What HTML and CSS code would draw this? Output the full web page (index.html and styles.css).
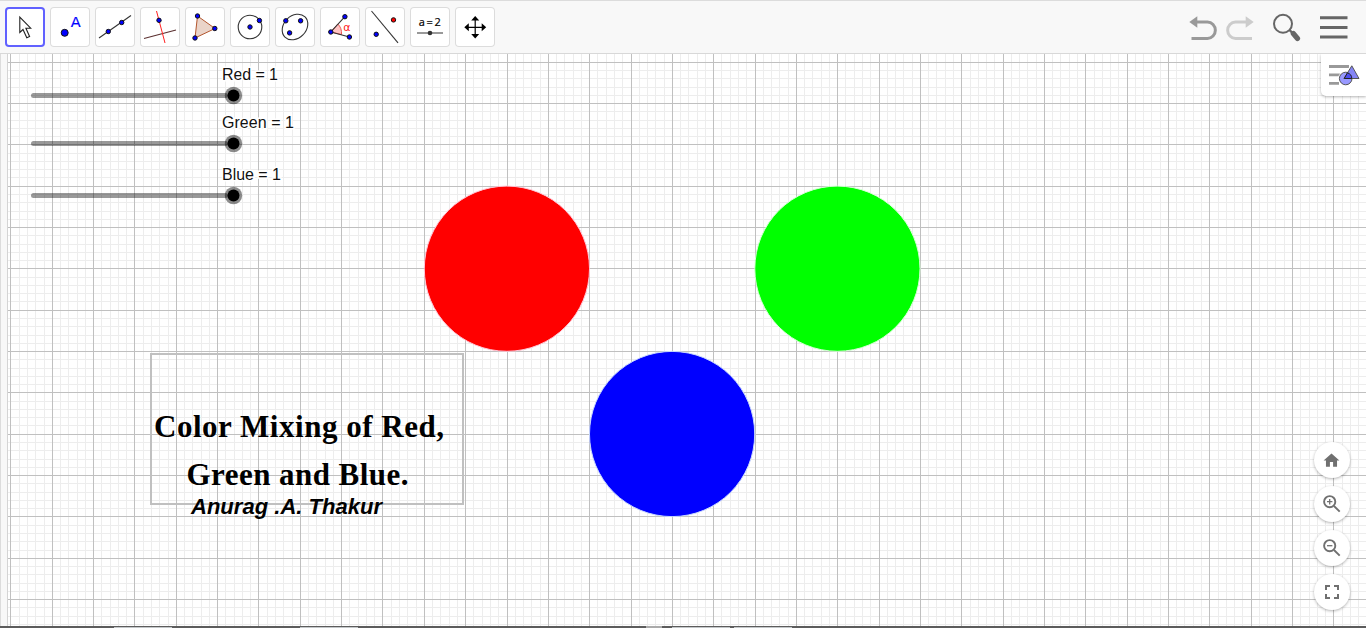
FILE: index.html
```html
<!DOCTYPE html>
<html lang="en">
<head>
<meta charset="utf-8">
<title>Color Mixing</title>
<link rel="stylesheet" href="styles.css">
</head>
<body>
<div class="app">
  <header class="toolbar">
    <div class="tools">
      <button class="tool selected" aria-label="Move"><svg viewBox="0 0 40 40"><path d="M14.800 10v15.500l3.200-3 3.800 8.200 2.800-1.200-3.700-8.300h4.800z" fill="#fff" stroke="#222" stroke-width="1.100"/></svg></button>
      <button class="tool" aria-label="Point"><svg viewBox="0 0 40 40"><circle class="pt" cx="14.700" cy="25.800" r="3.500"/><text x="20.700" y="19.500" class="letter">A</text></svg></button>
      <button class="tool" aria-label="Line"><svg viewBox="0 0 40 40"><path class="ln" d="M4 31 36 8.500"/><circle class="pt" cx="13.300" cy="24.500" r="2.200"/><circle class="pt" cx="26.700" cy="15.500" r="2.200"/></svg></button>
      <button class="tool" aria-label="Perpendicular"><svg viewBox="0 0 40 40"><path class="ln brown" d="M4 31.500 36 23"/><path d="M16.500 4 25 36" stroke="#ff2020"/><circle class="pt" cx="19" cy="13.300" r="2.200"/></svg></button>
      <button class="tool" aria-label="Polygon"><svg viewBox="0 0 40 40"><path d="M12.500 9 30 21.500 10 31z" fill="#ead4c9" stroke="#b3562e"/><circle class="pt" cx="12.500" cy="9" r="2.200"/><circle class="pt" cx="29.800" cy="21.500" r="2.200"/><circle class="pt" cx="10" cy="31" r="2.200"/></svg></button>
      <button class="tool" aria-label="Circle"><svg viewBox="0 0 40 40"><circle class="ln" cx="20" cy="20" r="11.800"/><circle class="pt" cx="20" cy="20" r="2.200"/><circle class="pt" cx="29.400" cy="13.500" r="2.200"/></svg></button>
      <button class="tool" aria-label="Conic"><svg viewBox="0 0 40 40"><ellipse class="ln" cx="20" cy="20" rx="14.200" ry="11.200" transform="rotate(-45 20 20)"/><circle class="pt" cx="10.800" cy="13.800" r="2.200"/><circle class="pt" cx="25.600" cy="13.800" r="2.200"/><circle class="pt" cx="14.600" cy="25.900" r="2.200"/></svg></button>
      <button class="tool" aria-label="Angle"><svg viewBox="0 0 40 40"><path d="M10.800 25 17.800 17Q22 21 21.500 27.500z" fill="#ffc4c4" stroke="#ee5555"/><path class="ln" d="M24.900 9.700 10.800 25 29.400 30"/><circle class="pt" cx="24.900" cy="9.700" r="2.200"/><circle class="pt" cx="10.800" cy="25" r="2.200"/><circle class="pt" cx="29.400" cy="30" r="2.200"/><text class="alpha" x="23.300" y="23.500">α</text></svg></button>
      <button class="tool" aria-label="Reflect"><svg viewBox="0 0 40 40"><path class="ln" d="M6.500 4 33 35.800"/><circle class="pt" cx="11.200" cy="27.300" r="2.200"/><circle class="pt red" cx="28.500" cy="12.900" r="2.200"/></svg></button>
      <button class="tool" aria-label="Slider"><svg viewBox="0 0 40 40"><text class="eq" x="8.800" y="18.800" textLength="22">a=2</text><path d="M7 26h26" stroke="#777" stroke-width="1.500"/><circle cx="20" cy="26" r="2.300" fill="#333"/></svg></button>
      <button class="tool" aria-label="Move view"><svg viewBox="0 0 40 40"><path d="M20.200 11v18M11 20.300h19" stroke="#000" stroke-width="1.200"/><path d="m20.200 9 4 4.500h-8zM20.200 31.600l-4-4.500h8zM9.300 20.300l4.500-4v8zM31.200 20.300l-4.500-4v8z"/></svg></button>
    </div>
    <div class="actions">
      <svg class="undo" viewBox="0 0 30 30"><path d="M8 8h10.500a7.800 8.200 0 0 1 0 16.500H2.500" fill="none" stroke="#999" stroke-width="3"/><path d="M.3 8l8-5.800v11.600z" fill="#999"/></svg>
      <svg class="redo" viewBox="0 0 30 30"><path d="M22 8H10.500a7.800 8.200 0 0 0 0 16.500H27" fill="none" stroke="#ccc" stroke-width="3"/><path d="M28.700 8l-8-5.800v11.600z" fill="#ccc"/></svg>
      <svg class="search" viewBox="0 0 30 30"><circle cx="10" cy="10.800" r="9" fill="none" stroke="#666" stroke-width="2"/><path d="m16.500 17 4 4" stroke="#666" stroke-width="2.400"/><path d="m20.300 20.500 4.200 5" stroke="#666" stroke-width="5.200" stroke-linecap="round"/></svg>
      <svg class="menu" viewBox="0 0 28 24"><path d="M0 1.700h27.500M0 11.500h27.500M0 21h27.500" stroke="#666" stroke-width="2.900"/></svg>
    </div>
  </header>
  <main class="workspace">
    <div class="divider"></div>
    <div class="view">
      <svg class="drawing" viewBox="8 54 1358 572">
        <path id="minor" class="minor"/>
        <path id="major" class="major"/>
        <g class="slider"><path d="M33.500 95.500h192"/><circle class="halo" cx="233.500" cy="95.500" r="8.700"/><circle cx="233.500" cy="95.500" r="6"/></g>
        <g class="slider"><path d="M33.500 143.500h192"/><circle class="halo" cx="233.500" cy="143.500" r="8.700"/><circle cx="233.500" cy="143.500" r="6"/></g>
        <g class="slider"><path d="M33.500 195.500h192"/><circle class="halo" cx="233.500" cy="195.500" r="8.700"/><circle cx="233.500" cy="195.500" r="6"/></g>
        <g class="label">
          <text x="222" y="80" textLength="56">Red = 1</text>
          <text x="222" y="128" textLength="72">Green = 1</text>
          <text x="222" y="180" textLength="59">Blue = 1</text>
        </g>
        <circle cx="506.900" cy="268.700" r="82.600" fill="#f00" stroke="#ffc8d8"/>
        <circle cx="837.400" cy="268.700" r="82.600" fill="#0f0" stroke="#d8ffd8"/>
        <circle cx="672.100" cy="434" r="82.600" fill="#00f" stroke="#c8d8ff"/>
        <rect class="frame" x="151" y="354" width="312" height="150"/>
        <g class="heading">
          <text x="154" y="437" textLength="290">Color Mixing of Red,</text>
          <text x="186.500" y="485" textLength="222">Green and Blue.</text>
        </g>
        <text class="author" x="191" y="514" textLength="191">Anurag .A. Thakur</text>
      </svg>
      <button class="stylebar" aria-label="Style bar"><svg viewBox="0 0 45 42"><path d="M8 12.500h20M8 20.800h12M8 29.300h10" stroke="#999" stroke-width="2.800"/><circle cx="24.700" cy="24.500" r="7.500" fill="#fff"/><path d="M30.800 9 40.500 25.500H20.500z" fill="#fff"/><circle cx="24.700" cy="24.500" r="6.300" fill="#9999ff" stroke="#555"/><path d="M30.800 11.800 38 24.500H23z" fill="#8585f5" stroke="#555"/><path d="M26.500 18.800Q31 20.500 30.700 24.500H23.200z" fill="#4d4df0" stroke="#222"/></svg></button>
      <div class="zoom-controls">
        <button class="round" aria-label="Home"><svg viewBox="0 0 24 24"><path d="M10 20v-6h4v6h5v-8h3L12 3 2 12h3v8z"/></svg></button>
        <button class="round" aria-label="Zoom in"><svg class="lens" viewBox="0 0 18 18"><circle cx="6.700" cy="6.700" r="5.600"/><path d="m11 11 5.700 5.700"/><path class="sign" d="M4 6.700h5.400M6.700 4v5.400"/></svg></button>
        <button class="round" aria-label="Zoom out"><svg class="lens" viewBox="0 0 18 18"><circle cx="6.700" cy="6.700" r="5.600"/><path d="m11 11 5.700 5.700"/><path class="sign" d="M4 6.700h5.400"/></svg></button>
        <button class="round" aria-label="Fullscreen"><svg class="full" viewBox="0 0 14 14"><path d="M0 5V0h5v2H2v3zM9 0h5v5h-2V2H9zM0 9h2v3h3v2H0zM12 9h2v5H9v-2h3z"/></svg></button>
      </div>
    </div>
  </main>
  <footer class="taskbar"><i class="seg s1"></i><i class="seg s2"></i><i class="glint"></i><i class="seg s3"></i><i class="seg s4"></i></footer>
</div>
<script src="grid.js"></script>
</body>
</html>
```
FILE: styles.css
```css
* { box-sizing: border-box; }
body { margin: 0; overflow: hidden; font-family: "Liberation Sans", sans-serif; }
button { padding: 0; border: 0; background: #fff; }
svg { display: block; }
.app { display: flex; flex-direction: column; width: 1366px; height: 628px; background: #fff; }
.toolbar { display: flex; justify-content: space-between; height: 54px; padding: 6px 18px 0 5px; background: #f8f8f8; border-top: 1px solid #dcdcdc; border-bottom: 1px solid #d8d8d8; }
.tools { display: flex; gap: 5px; }
.tool { width: 40px; height: 40px; border-radius: 4px; box-shadow: inset 0 0 0 1px #dcdcdc; }
.tool.selected { box-shadow: inset 0 0 0 2px #6161ff; }
.tool svg { width: 40px; height: 40px; }
.ln { fill: none; stroke: #333; stroke-width: 1.1; }
.brown { stroke: #5b3030; }
.pt { fill: #00f; stroke: #111; stroke-width: 1; }
.pt.red { fill: #f00; }
.letter { font: 14.5px "DejaVu Sans", sans-serif; fill: #00f; stroke: #00f; stroke-width: .2px; }
.alpha { font: 11px "DejaVu Sans", sans-serif; fill: #f22; }
.eq { font: 11px "Open Sans", sans-serif; fill: #000; stroke: #000; stroke-width: .2px; }
.actions { display: flex; }
.undo, .redo { width: 30px; height: 30px; margin-top: 7px; }
.undo { margin-right: 6px; }
.search { width: 30px; height: 30px; margin: 6px 17px 0 18px; }
.menu { width: 28px; height: 24px; margin-top: 9px; }
.workspace { display: flex; height: 572px; }
.divider { width: 8px; background: #f8f8f8; border-left: 1px solid #dcdcdc; border-right: 1px solid #d4d4d4; }
.view { position: relative; width: 1358px; height: 572px; }
.drawing { width: 1358px; height: 572px; }
.minor, .major { fill: none; stroke-width: 1; shape-rendering: crispEdges; }
.minor { stroke: #ededed; }
.major { stroke: #c0c0c0; }
.slider path { stroke: #000; stroke-opacity: .4; stroke-width: 5; stroke-linecap: round; }
.slider .halo { fill-opacity: .45; }
.label { font: 16px "Liberation Sans", sans-serif; fill: #111; stroke: #fff; stroke-width: 3px; paint-order: stroke; }
.frame { fill: none; stroke: #c0c0c0; stroke-width: 2; }
.heading { font: bold 31px "Liberation Serif", serif; }
.author { font: italic bold 22px "Liberation Sans", sans-serif; }
.stylebar { position: absolute; top: 0; right: 0; width: 45px; height: 42px; border-radius: 0 0 0 5px; box-shadow: 0 1px 3px rgba(0,0,0,.3); clip-path: inset(0 0 -5px -5px); }
.stylebar svg { width: 45px; height: 42px; margin-top: -1px; }
.zoom-controls { position: absolute; right: 16px; top: 388px; display: grid; gap: 8px; }
.round { display: grid; place-items: center; width: 36px; height: 36px; border-radius: 50%; box-shadow: 0 1px 3px rgba(0,0,0,.3); }
.round svg { width: 19px; height: 19px; margin-right: 1px; fill: #707070; }
.round .lens { width: 18px; height: 18px; fill: none; stroke: #707070; stroke-width: 1.9; }
.round .sign { stroke-width: 1.3; }
.round .full { width: 14px; height: 14px; margin-right: 0; }
.taskbar { display: flex; height: 2px; background: #5c5c5c; }
.seg { width: 58px; height: 1px; margin-top: 1px; background: #c4c8ca; }
.s1 { margin-left: 114px; }
.s2 { margin-left: 128px; }
.glint { width: 16px; margin-left: 288px; background: #aaa; }
.s3 { margin-left: 10px; }
.s4 { margin-left: 4px; }
```
FILE: grid.js
```js
// Pixel-aligned grid: five minor cells per major cell.
const CELL = 41.34 / 5;
const paths = { minor: "", major: "" };
for (let i = 0; i < 170; i++) {
  const x = Math.floor(10.93 + i * CELL) + 0.5;
  if (x < 1366) paths[i % 5 ? "minor" : "major"] += `M${x} 54V626`;
}
for (let i = 0; i < 70; i++) {
  const y = Math.floor(62.2 + i * CELL) + 0.5;
  if (y < 626) paths[i % 5 ? "minor" : "major"] += `M8 ${y}H1366`;
}
for (const id in paths) document.getElementById(id).setAttribute("d", paths[id]);
```
